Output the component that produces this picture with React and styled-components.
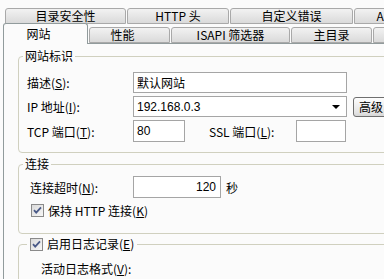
import React from 'react';
import styled, { createGlobalStyle } from 'styled-components';

const GlobalStyle = createGlobalStyle`
  html, body {
    margin: 0;
    padding: 0;
    background: #fbfbfb;
    overflow: hidden;
  }
  body {
    font-family: "Noto Sans CJK SC", "Noto Sans", sans-serif;
    font-size: 12px;
    color: #000;
  }
  u {
    text-decoration-thickness: 1px;
    text-underline-offset: 1px;
  }
`;

const Dialog = styled.div`
  width: 384px;
  height: 279px;
  overflow: hidden;
  background: #fbfbfb;
  padding-top: 9px;
  box-sizing: border-box;
`;

const TabRow = styled.div`
  display: flex;
  align-items: flex-end;
  gap: 1px;
  height: ${({ $h }) => $h}px;
  padding-left: ${({ $indent }) => $indent}px;
  position: relative;
  z-index: ${({ $z }) => $z || 0};
`;

const Tab = styled.div`
  flex: 0 0 ${({ $w }) => $w}px;
  height: ${({ $active }) => ($active ? 21 : 16)}px;
  margin-bottom: ${({ $active }) => ($active ? -1 : 0)}px;
  padding-right: ${({ $shift }) => $shift || 0}px;
  box-sizing: border-box;
  border: 1px solid ${({ $active }) => ($active ? '#919b9c' : '#a9a9a9')};
  border-bottom: ${({ $active }) => ($active ? 'none' : '1px solid #a9a9a9')};
  border-radius: 3px 3px 0 0;
  background: ${({ $active }) =>
    $active ? '#fbfbfb' : 'linear-gradient(#f2f2f2, #dadada)'};
  display: flex;
  align-items: center;
  justify-content: center;
  white-space: nowrap;
  line-height: 1;
  overflow: hidden;
`;

const Panel = styled.div`
  margin-left: 3px;
  border-left: 1px solid #919b9c;
  border-top: 1px solid #919b9c;
  padding: 5px 0 0 14px;
  height: 300px;
  width: 460px;
`;

const Group = styled.fieldset`
  margin: ${({ $mt }) => $mt || 0}px 0 0 0;
  padding: 0;
  width: 440px;
  box-sizing: border-box;
  border: 1px solid #d0d0bf;
  border-radius: 4px;
`;

const Legend = styled.legend`
  margin-left: ${({ $ml }) => $ml || 4}px;
  padding: 0 ${({ $pad }) => $pad || 2}px;
  height: 14px;
  line-height: 14px;
  display: flex;
  align-items: center;
  gap: 4px;
  white-space: nowrap;
`;

const GroupBody = styled.div`
  padding: ${({ $pt }) => $pt}px 0 ${({ $pb }) => $pb}px ${({ $pl }) => $pl}px;
  display: flex;
  flex-direction: column;
  gap: ${({ $gap }) => $gap || 3}px;
`;

const Row = styled.div`
  display: flex;
  align-items: center;
  height: ${({ $h }) => $h || 21}px;
  padding-left: ${({ $pl }) => $pl || 0}px;
  white-space: nowrap;
`;

const Label = styled.span`
  flex: 0 0 ${({ $w }) => $w}px;
  margin-left: ${({ $ml }) => $ml || 0}px;
  white-space: nowrap;
`;

const TextBox = styled.div`
  flex: 0 0 ${({ $w }) => $w}px;
  height: ${({ $h }) => $h || 21}px;
  box-sizing: border-box;
  border: 1px solid #a5a5a5;
  background: #fff;
  display: flex;
  align-items: center;
  justify-content: ${({ $right }) => ($right ? 'flex-end' : 'flex-start')};
  padding: 0 4px 0 3px;
  font-family: "Liberation Sans", "Noto Sans CJK SC", sans-serif;
  font-size: 12px;
`;

const CjkText = styled.span`
  font-family: "Noto Sans CJK SC", sans-serif;
`;

const SelectBox = styled(TextBox)`
  justify-content: space-between;
  padding-right: 6px;
`;

const Arrow = styled.span`
  width: 0;
  height: 0;
  border-left: 4px solid transparent;
  border-right: 4px solid transparent;
  border-top: 4px solid #000;
`;

const Button = styled.div`
  flex: 0 0 50px;
  height: 20px;
  margin-left: 6px;
  box-sizing: border-box;
  border: 1px solid #6f6f6f;
  border-radius: 3px;
  background: linear-gradient(#fdfdfd, #e4e4e4 80%, #d6d6d6);
  display: flex;
  align-items: center;
  padding-left: 5px;
`;

const Unit = styled.span`
  margin-left: 5px;
`;

const CheckLabel = styled.span`
  margin-left: 4px;
`;

function Check() {
  return (
    <svg width="13" height="13" viewBox="0 0 13 13">
      <defs>
        <linearGradient id="cbg" x1="0" y1="0" x2="1" y2="1">
          <stop offset="0" stopColor="#d9d9d9" />
          <stop offset="1" stopColor="#f8f8f8" />
        </linearGradient>
      </defs>
      <rect x="0.5" y="0.5" width="12" height="12" fill="url(#cbg)" stroke="#8a8a8a" />
      <path d="M3 6.2 L5.2 8.6 L10 3.4" fill="none" stroke="#4a5a88" strokeWidth="1.8" />
    </svg>
  );
}

const topTabs = [
  { title: '目录安全性', w: 121 },
  { title: 'HTTP 头', w: 102 },
  { title: '自定义错误', w: 123 },
  { title: 'ASP.NET', w: 92 },
];

const bottomTabs = [
  { title: '网站', w: 85, active: true, shift: 14 },
  { title: '性能', w: 81, shift: 14 },
  { title: 'ISAPI 筛选器', w: 119 },
  { title: '主目录', w: 81 },
  { title: '文档', w: 84 },
];

export default function App() {
  return (
    <Dialog>
      <GlobalStyle />
      <TabRow $h={15} $indent={5}>
        {topTabs.map((t) => (
          <Tab key={t.title} $w={t.w}>
            {t.title}
          </Tab>
        ))}
      </TabRow>
      <TabRow $h={19} $indent={3} $z={1}>
        {bottomTabs.map((t) => (
          <Tab key={t.title} $w={t.w} $active={t.active} $shift={t.shift}>
            {t.title}
          </Tab>
        ))}
      </TabRow>
      <Panel>
        <Group>
          <Legend>网站标识</Legend>
          <GroupBody $pt={9} $pb={10} $pl={8}>
            <Row>
              <Label $w={106}>
                描述(<u>S</u>):
              </Label>
              <TextBox $w={214}>
                <CjkText>默认网站</CjkText>
              </TextBox>
            </Row>
            <Row>
              <Label $w={106}>
                IP 地址(<u>I</u>):
              </Label>
              <SelectBox $w={214}>
                192.168.0.3
                <Arrow />
              </SelectBox>
              <Button>高级</Button>
            </Row>
            <Row $h={22}>
              <Label $w={106}>
                TCP 端口(<u>T</u>):
              </Label>
              <TextBox $w={52} $h={22}>
                80
              </TextBox>
              <Label $w={87} $ml={24}>
                SSL 端口(<u>L</u>):
              </Label>
              <TextBox $w={50} $h={22} />
            </Row>
          </GroupBody>
        </Group>

        <Group $mt={4}>
          <Legend>连接</Legend>
          <GroupBody $pt={5} $pb={14} $pl={11}>
            <Row $h={22}>
              <Label $w={103}>
                连接超时(<u>N</u>):
              </Label>
              <TextBox $w={88} $h={22} $right>
                120
              </TextBox>
              <Unit>秒</Unit>
            </Row>
            <Row $h={18} $pl={1}>
              <Check />
              <CheckLabel>
                保持 HTTP 连接(<u>K</u>)
              </CheckLabel>
            </Row>
          </GroupBody>
        </Group>

        <Group $mt={3}>
          <Legend $ml={8} $pad={3}>
            <Check />
            <span>
              启用日志记录(<u>E</u>)
            </span>
          </Legend>
          <GroupBody $pt={9} $pb={20} $pl={22}>
            <Row $h={16}>
              <Label $w={110}>
                活动日志格式(<u>V</u>):
              </Label>
            </Row>
          </GroupBody>
        </Group>
      </Panel>
    </Dialog>
  );
}
